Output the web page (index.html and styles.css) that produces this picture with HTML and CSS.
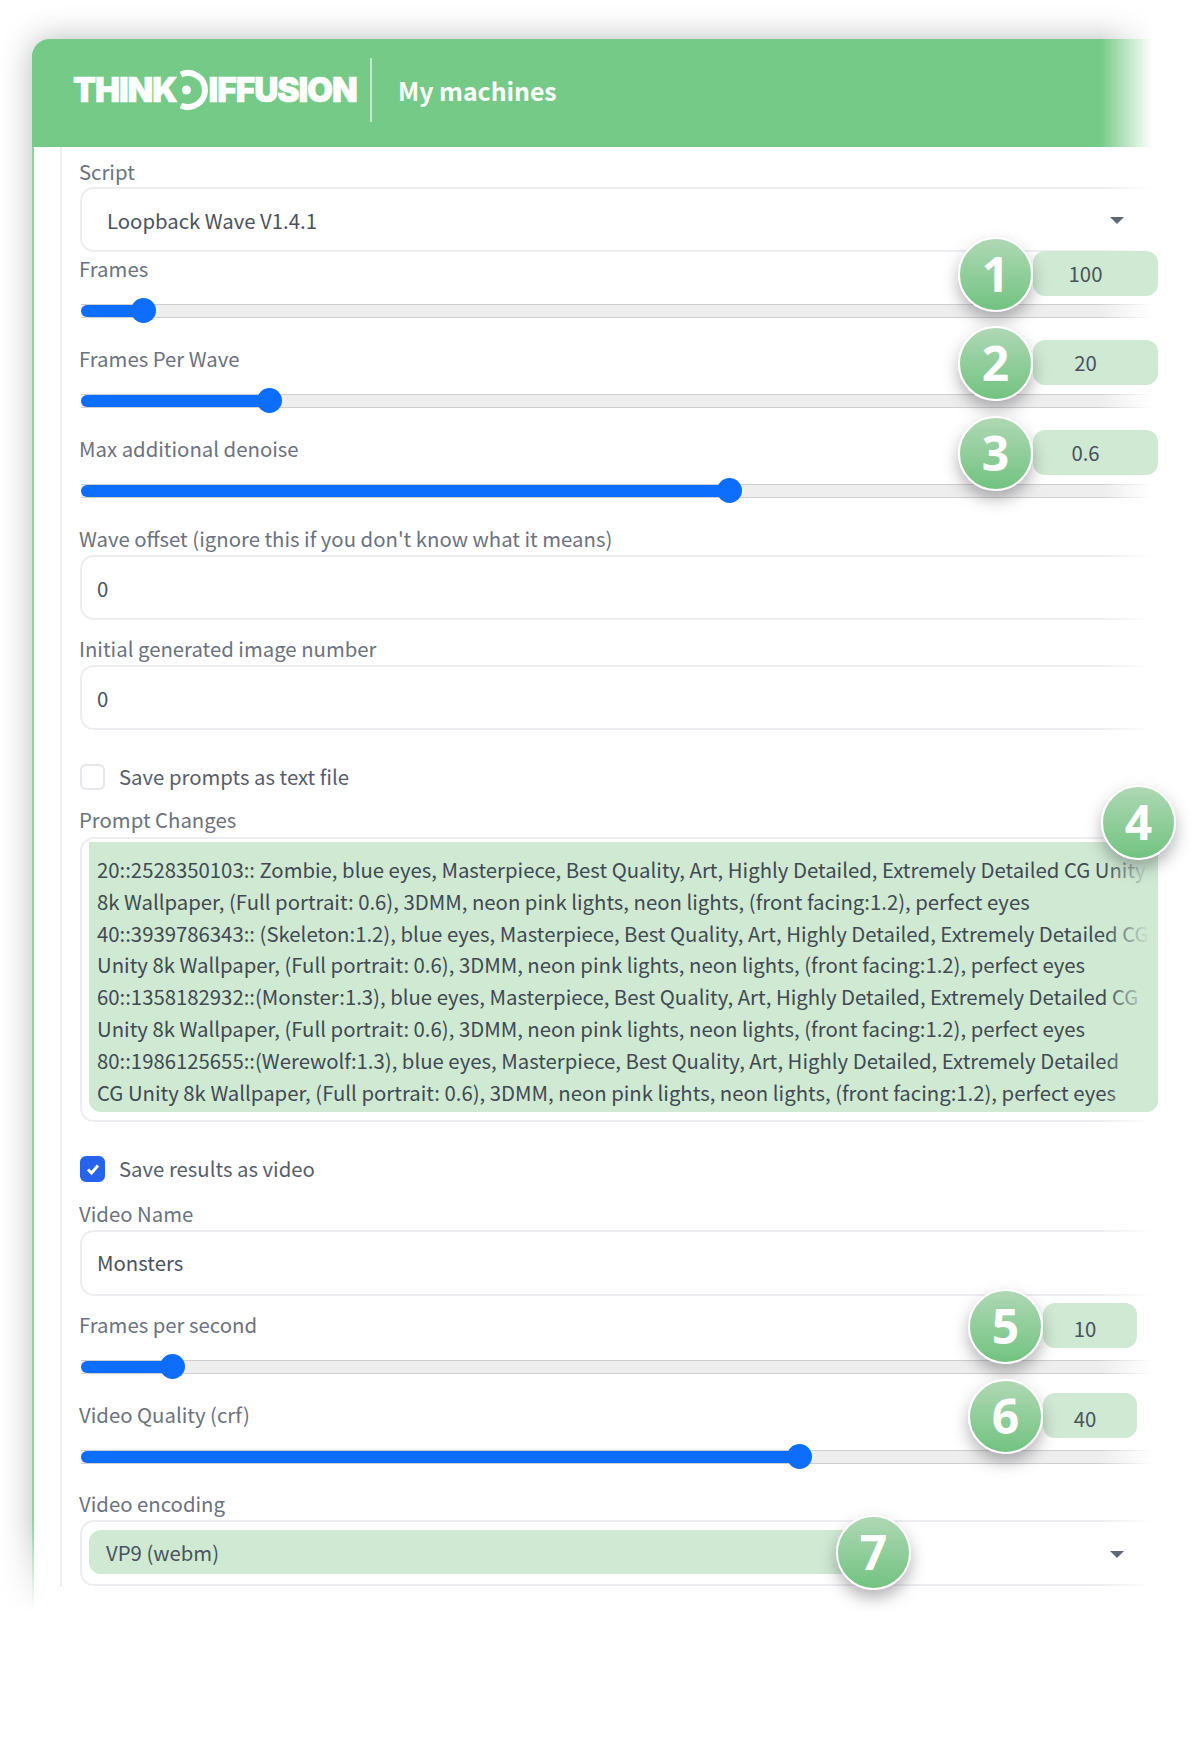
FILE: index.html
```html
<!DOCTYPE html>
<html lang="en">
<head>
    <meta charset="UTF-8">
    <meta name="viewport" content="width=device-width, initial-scale=1.0">
    <title>ThinkDiffusion - Loopback Wave</title>
    <link rel="stylesheet" href="styles.css">
</head>
<body>
    <div class="shot">
        <div class="card">
            <header class="header">
                <div class="logo">
                    <span>THINK</span>
                    <svg class="logo-mark" width="30" height="42" viewBox="0 0 30 42">
                        <path d="M3 5.5 A17 17 0 1 1 3 36.5" fill="none" stroke="#fff" stroke-width="6"/>
                        <circle cx="8.5" cy="21" r="4.5" fill="#fff"/>
                    </svg>
                    <span>IFFUSION</span>
                </div>
                <div class="header-title">My machines</div>
            </header>

            <div class="form">
                <div class="field">
                    <div class="label-row"><span class="label">Script</span></div>
                    <div class="box select">
                        <span class="select-value">Loopback Wave V1.4.1</span>
                        <span class="arrow"></span>
                    </div>
                </div>

                <div class="slider-field">
                    <div class="label-row">
                        <span class="label">Frames</span>
                        <div class="number up-3"><span class="badge">1</span>100</div>
                    </div>
                    <div class="track"><div class="fill" style="width: 63px"></div></div>
                </div>

                <div class="slider-field">
                    <div class="label-row">
                        <span class="label">Frames Per Wave</span>
                        <div class="number"><span class="badge">2</span>20</div>
                    </div>
                    <div class="track"><div class="fill" style="width: 189px"></div></div>
                </div>

                <div class="slider-field">
                    <div class="label-row">
                        <span class="label">Max additional denoise</span>
                        <div class="number"><span class="badge">3</span>0.6</div>
                    </div>
                    <div class="track"><div class="fill" style="width: 649px"></div></div>
                </div>

                <div class="field">
                    <div class="label-row"><span class="label">Wave offset (ignore this if you don't know what it means)</span></div>
                    <div class="box input">0</div>
                </div>

                <div class="field spaced">
                    <div class="label-row"><span class="label">Initial generated image number</span></div>
                    <div class="box input">0</div>
                </div>

                <label class="check-row">
                    <span class="checkbox"></span>
                    <span class="check-label">Save prompts as text file</span>
                </label>

                <div class="field prompt-field">
                    <div class="label-row"><span class="label">Prompt Changes</span></div>
                    <div class="box textarea">
                        <span class="badge badge-prompt">4</span>
                        <div class="prompt-text">
                            20::2528350103:: Zombie, blue eyes, Masterpiece, Best Quality, Art, Highly Detailed, Extremely Detailed CG Unity<br>
                            8k Wallpaper, (Full portrait: 0.6), 3DMM, neon pink lights, neon lights, (front facing:1.2), perfect eyes<br>
                            40::3939786343:: (Skeleton:1.2), blue eyes, Masterpiece, Best Quality, Art, Highly Detailed, Extremely Detailed CG<br>
                            Unity 8k Wallpaper, (Full portrait: 0.6), 3DMM, neon pink lights, neon lights, (front facing:1.2), perfect eyes<br>
                            60::1358182932::(Monster:1.3), blue eyes, Masterpiece, Best Quality, Art, Highly Detailed, Extremely Detailed CG<br>
                            Unity 8k Wallpaper, (Full portrait: 0.6), 3DMM, neon pink lights, neon lights, (front facing:1.2), perfect eyes<br>
                            80::1986125655::(Werewolf:1.3), blue eyes, Masterpiece, Best Quality, Art, Highly Detailed, Extremely Detailed<br>
                            CG Unity 8k Wallpaper, (Full portrait: 0.6), 3DMM, neon pink lights, neon lights, (front facing:1.2), perfect eyes
                        </div>
                    </div>
                </div>

                <label class="check-row">
                    <span class="checkbox checked">
                        <svg width="16" height="16" viewBox="0 0 16 16"><path d="M3 8.5 L6.5 12 L13 4.5" fill="none" stroke="#fff" stroke-width="3"/></svg>
                    </span>
                    <span class="check-label">Save results as video</span>
                </label>

                <div class="field name-field">
                    <div class="label-row"><span class="label">Video Name</span></div>
                    <div class="box input tall">Monsters</div>
                </div>

                <div class="slider-field spaced">
                    <div class="label-row">
                        <span class="label">Frames per second</span>
                        <div class="number small"><span class="badge">5</span>10</div>
                    </div>
                    <div class="track"><div class="fill" style="width: 92px"></div></div>
                </div>

                <div class="slider-field">
                    <div class="label-row">
                        <span class="label">Video Quality (crf)</span>
                        <div class="number small"><span class="badge">6</span>40</div>
                    </div>
                    <div class="track"><div class="fill" style="width: 719px"></div></div>
                </div>

                <div class="field encoding-field">
                    <div class="label-row"><span class="label">Video encoding</span></div>
                    <div class="box select tall">
                        <span class="select-highlight">VP9 (webm)<span class="badge badge-select">7</span></span>
                        <span class="arrow"></span>
                    </div>
                </div>
            </div>
        </div>

        <!-- the crop of the screenshot fades out on the right and bottom left -->
        <div class="fade-right"></div>
        <div class="fade-bottom"></div>
    </div>
</body>
</html>
```

FILE: styles.css
```css
:root {
    --green: #74ca86;
    --green-light: #cfe9d3;
    --blue: #0d6efd;
    --border: #eeeef2;
    --text-label: #6b7280;
    --text-value: #4a5260;
}

* {
    box-sizing: border-box;
    margin: 0;
    padding: 0;
}

body {
    font-family: "Noto Sans CJK SC", "Noto Sans", sans-serif;
    font-size: 20.33px;
    background-color: #fff;
    color: var(--text-value);
}

.shot {
    position: relative;
    height: 1612px;
    padding: 39px 0 0 32px;
    overflow: hidden;
}

.card {
    width: 1160px;
    height: 1640px;
    background-color: #fff;
    border-left: 2px solid #8fd49e;
    border-radius: 18px 0 0 0;
    box-shadow: 0 0 32px rgba(0, 0, 0, 0.28);
}

.header {
    display: flex;
    align-items: center;
    height: 108px;
    margin-left: -2px;
    padding-bottom: 6px;
    background-color: var(--green);
    border-radius: 18px 0 0 0;
}

.logo {
    display: flex;
    align-items: center;
    flex: none;
    width: 340px;
    height: 64px;
    padding-left: 41px;
    border-right: 2px solid #c4e6cb;
    font-family: Inter, sans-serif;
    font-size: 33.5px;
    font-weight: 900;
    letter-spacing: -1.1px;
    color: #fff;
    -webkit-text-stroke: 0.6px #fff;
}

.logo-mark {
    flex: none;
    margin: 0 1px 0 1px;
}

.header-title {
    margin-left: 26px;
    font-size: 24.8px;
    font-weight: 700;
    color: #fff;
}

.form {
    width: 1098px;
    height: 1440px;
    margin-left: 26px;
    padding: 10px 0 0 18px;
    border-left: 2px solid var(--border);
}

.label-row {
    display: flex;
    justify-content: space-between;
    align-items: flex-start;
    height: 30px;
    line-height: 29px;
}

.label {
    margin-left: -1px;
    color: var(--text-label);
}

.box {
    display: flex;
    align-items: center;
    position: relative;
    height: 65px;
    border: 2px solid var(--border);
    border-radius: 14px;
}

.box.tall {
    height: 66px;
    padding-bottom: 2px;
}

.field {
    margin-bottom: 2px;
}

.field.spaced {
    margin-top: 14px;
}

.select {
    justify-content: space-between;
    padding-right: 32px;
}

.select-value {
    padding-left: 25px;
}

.arrow {
    position: relative;
    z-index: 2;
    width: 0;
    height: 0;
    margin-top: 2px;
    border-left: 7px solid transparent;
    border-right: 7px solid transparent;
    border-top: 7px solid #5f6675;
}

.input {
    margin-top: 1px;
    padding-left: 15px;
}

.slider-field {
    height: 90px;
}

.track {
    position: relative;
    height: 14px;
    margin: 20px 0 0 1px;
    background-color: #eeeeee;
    border-top: 1px solid #cfcfcf;
    border-bottom: 1px solid #cfcfcf;
}

.fill {
    position: relative;
    height: 12px;
    background-color: var(--blue);
    border-radius: 6px;
}

.fill::after {
    content: "";
    position: absolute;
    right: -12px;
    top: -7px;
    width: 25px;
    height: 25px;
    background-color: var(--blue);
    border-radius: 50%;
}

.number {
    position: relative;
    z-index: 2;
    flex: none;
    width: 125px;
    height: 45px;
    margin-top: -4px;
    padding-right: 20px;
    line-height: 45px;
    text-align: center;
    background-color: var(--green-light);
    border-radius: 12px;
}

.number.up-3 {
    margin-top: -3px;
}

.number.small {
    width: 94px;
    margin: -7px 21px 0 0;
    padding-right: 10px;
    line-height: 50px;
}

.badge {
    position: absolute;
    z-index: 3;
    right: 100%;
    top: calc(50% - 37px);
    width: 75px;
    height: 75px;
    font-family: "Open Sans", sans-serif;
    font-size: 48px;
    font-weight: 700;
    line-height: 69px;
    text-align: center;
    color: #fff;
    background: linear-gradient(#afd8b4, #72c381);
    border: 2.5px solid #fff;
    border-radius: 50%;
    box-shadow: 0 8px 16px rgba(40, 40, 50, 0.35);
}

.check-row {
    display: flex;
    align-items: center;
    gap: 14px;
    height: 26px;
    margin-top: 34px;
    color: #565e6c;
}

.check-label {
    margin-bottom: 2px;
}

.checkbox {
    display: flex;
    align-items: center;
    justify-content: center;
    width: 25px;
    height: 26px;
    background-color: #fff;
    border: 2px solid #e5e7eb;
    border-radius: 6px;
}

.checkbox.checked {
    background-color: #2563eb;
    border-color: #2563eb;
}

.prompt-field {
    margin-top: 15px;
}

.prompt-field .label-row {
    height: 32px;
}

.textarea {
    display: block;
    height: 285px;
    padding: 3px 0 0 7px;
}

.prompt-text {
    position: relative;
    z-index: 2;
    width: 1069px;
    height: 270px;
    padding: 12px 0 0 8px;
    line-height: 31.8px;
    white-space: nowrap;
    overflow: hidden;
    color: #414a52;
    background-color: var(--green-light);
    border-radius: 0 0 12px 12px;
}

.prompt-text::after {
    content: "";
    position: absolute;
    right: 0;
    top: 0;
    width: 54px;
    height: 100%;
    background: linear-gradient(to right, rgba(207, 233, 211, 0), var(--green-light) 85%);
}

.badge-prompt {
    right: auto;
    left: 1019px;
    top: -54px;
}

.name-field {
    margin-top: 17px;
}

.slider-field.spaced {
    margin-top: 14px;
}

.encoding-field {
    margin-top: -1px;
}

.encoding-field .box {
    margin-top: 1px;
    padding-bottom: 0;
}

.select-highlight {
    position: relative;
    z-index: 2;
    width: 762px;
    height: 44px;
    margin: -2px 0 0 7px;
    padding-left: 17px;
    line-height: 44px;
    background-color: var(--green-light);
    border-radius: 12px 0 0 12px;
}

.badge-select {
    right: -60px;
    top: calc(50% - 37px);
}

.fade-right {
    position: absolute;
    z-index: 1;
    top: 0;
    left: 1100px;
    width: 100px;
    height: 100%;
    background: linear-gradient(to right, rgba(255, 255, 255, 0), #fff 52%);
}

.fade-bottom {
    position: absolute;
    z-index: 1;
    left: 0;
    bottom: 0;
    width: 58px;
    height: 90px;
    background: linear-gradient(rgba(255, 255, 255, 0), #fff);
}
```
